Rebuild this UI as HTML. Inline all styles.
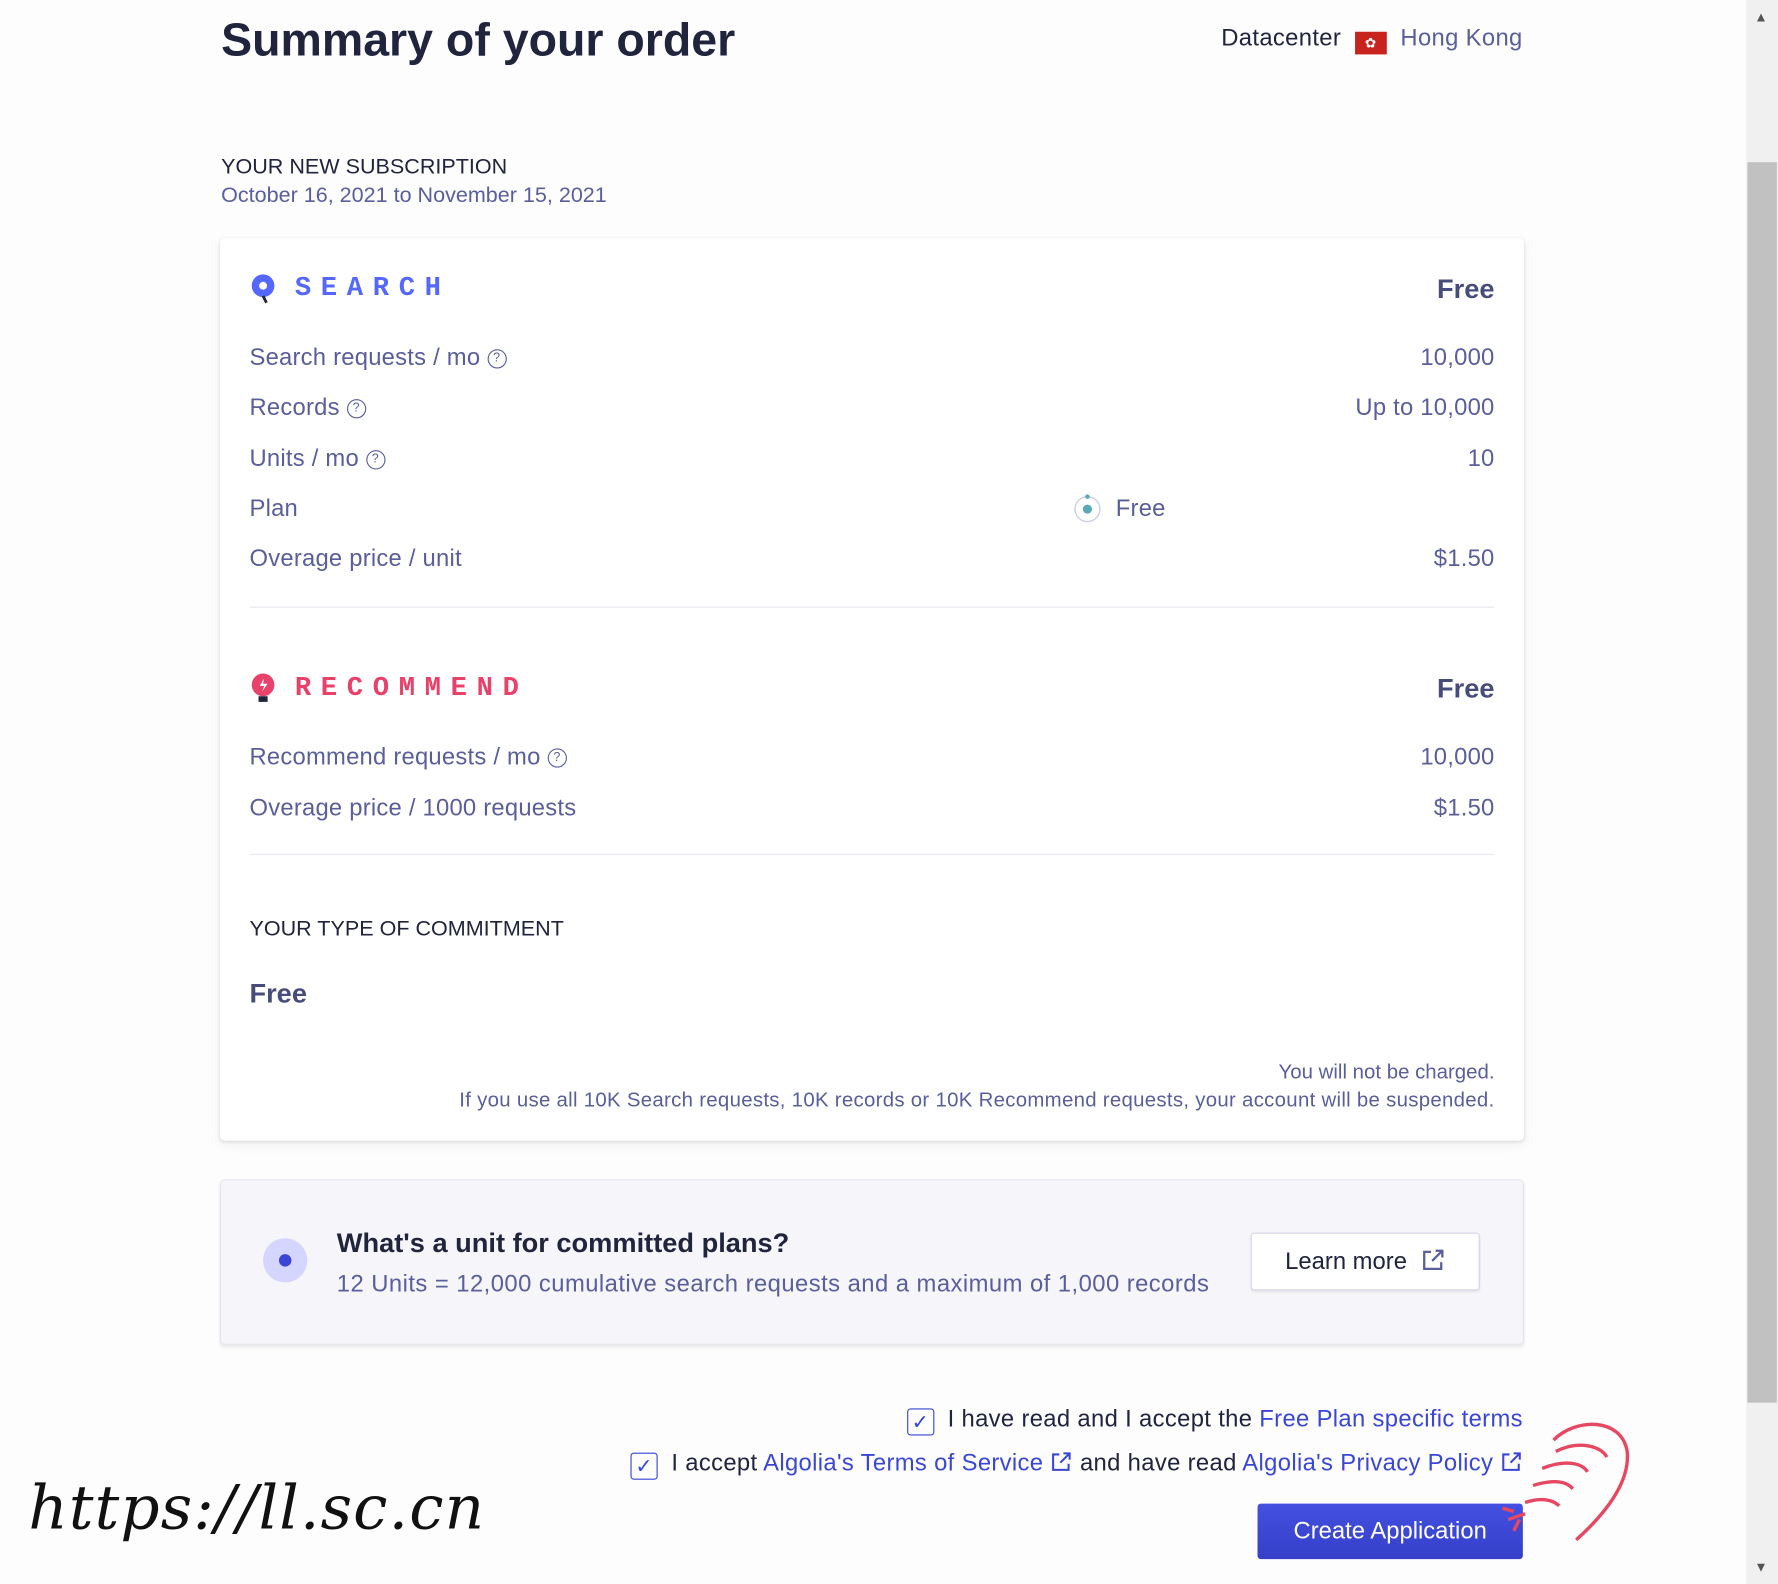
<!DOCTYPE html>
<html><head><meta charset="utf-8"><style>
html,body{margin:0;padding:0;width:1778px;height:1584px;overflow:hidden;background:#fdfdfe;}
#w{position:absolute;left:0;top:0;width:1568px;height:1397px;transform:scale(1.13393);transform-origin:0 0;font-family:"Liberation Sans",sans-serif;color:#5a5e9a;}
.a{position:absolute;white-space:nowrap;}
.r{text-align:right;}
.row{font-size:21px;color:#5a5e9a;letter-spacing:0.2px;}
.q{display:inline-block;width:15px;height:15px;border:1.5px solid #5a5e9a;border-radius:50%;font-size:11px;line-height:15px;text-align:center;vertical-align:3px;margin-left:6px;}
.hd{font-family:"Liberation Mono",monospace;font-weight:bold;font-size:24px;letter-spacing:8.5px;}
.free{font-size:24px;font-weight:bold;color:#484c7a;}
.line{position:absolute;left:220px;width:1098px;height:1px;background:#e8e8f0;}
.cb{display:inline-block;width:22px;height:22px;border:1.5px solid #3a46d4;border-radius:3px;vertical-align:-2px;margin-right:12px;color:#3a46d4;font-size:18px;line-height:22px;text-align:center;}
a{color:#3a46d4;text-decoration:none;}
</style></head><body><div id="w">
<div class="a" style="left:195px;top:12px;font-size:41px;font-weight:600;color:#21243d;">Summary of your order</div>
<div class="a" style="left:1077px;top:22px;font-size:21px;color:#21243d;letter-spacing:0.3px;">Datacenter <span style="display:inline-block;width:28px;height:20px;background:#c8241d;vertical-align:-2px;margin:0 6px;color:#fff;font-size:12px;text-align:center;line-height:20px;">✿</span> <span style="color:#5a5e9a">Hong Kong</span></div>
<div class="a" style="left:195px;top:137px;font-size:19px;color:#21243d;">YOUR NEW SUBSCRIPTION</div>
<div class="a" style="left:195px;top:162px;font-size:19px;">October 16, 2021 to November 15, 2021</div>

<div class="a" style="left:194px;top:210px;width:1150px;height:796px;background:#fff;border-radius:4px;box-shadow:0 1px 3px rgba(0,0,0,.12),0 4px 10px rgba(0,0,0,.05);"></div>

<svg class="a" style="left:221px;top:241px" width="22" height="28" viewBox="0 0 22 28"><circle cx="11" cy="11" r="10" fill="#5468ff"/><circle cx="11" cy="11" r="3.5" fill="#fff"/><path d="M11 20l3 6" stroke="#21243d" stroke-width="2.5"/></svg>
<div class="a hd" style="left:260px;top:241px;color:#5468ff;">SEARCH</div>
<div class="a free r" style="right:250px;top:242px;">Free</div>
<div class="a row" style="left:220px;top:304px;">Search requests / mo<span class="q">?</span></div>
<div class="a row r" style="right:250px;top:304px;">10,000</div>
<div class="a row" style="left:220px;top:348px;">Records<span class="q">?</span></div>
<div class="a row r" style="right:250px;top:348px;">Up to 10,000</div>
<div class="a row" style="left:220px;top:393px;">Units / mo<span class="q">?</span></div>
<div class="a row r" style="right:250px;top:393px;">10</div>
<div class="a row" style="left:220px;top:437px;">Plan</div>
<svg class="a" style="left:945px;top:434px" width="28" height="28"><circle cx="14" cy="15" r="11" fill="none" stroke="#ccd" stroke-width="1.2"/><circle cx="14" cy="15" r="4" fill="#5aa8b8"/><circle cx="14" cy="4" r="2" fill="#5aa8b8"/></svg>
<div class="a row" style="left:984px;top:437px;">Free</div>
<div class="a row" style="left:220px;top:481px;">Overage price / unit</div>
<div class="a row r" style="right:250px;top:481px;">$1.50</div>
<div class="line" style="top:535px"></div>

<svg class="a" style="left:221px;top:594px" width="22" height="28" viewBox="0 0 22 28"><circle cx="11" cy="10" r="10" fill="#e8416a"/><path d="M12 4l-4 7h4l-2 5 5-7h-4z" fill="#fff"/><rect x="7" y="20" width="8" height="5" fill="#21243d"/></svg>
<div class="a hd" style="left:260px;top:594px;color:#e8416a;">RECOMMEND</div>
<div class="a free r" style="right:250px;top:594px;">Free</div>
<div class="a row" style="left:220px;top:656px;">Recommend requests / mo<span class="q">?</span></div>
<div class="a row r" style="right:250px;top:656px;">10,000</div>
<div class="a row" style="left:220px;top:701px;">Overage price / 1000 requests</div>
<div class="a row r" style="right:250px;top:701px;">$1.50</div>
<div class="line" style="top:753px"></div>

<div class="a" style="left:220px;top:809px;font-size:19px;color:#21243d;">YOUR TYPE OF COMMITMENT</div>
<div class="a free" style="left:220px;top:863px;">Free</div>
<div class="a r" style="right:250px;top:935px;font-size:18px;">You will not be charged.</div>
<div class="a r" style="right:250px;top:960px;font-size:18px;letter-spacing:0.25px;">If you use all 10K Search requests, 10K records or 10K Recommend requests, your account will be suspended.</div>

<div class="a" style="left:194px;top:1040px;width:1148px;height:144px;background:#f5f5fa;border:1px solid #e6e6ee;border-radius:4px;box-shadow:0 2px 3px rgba(0,0,0,.08);"></div>
<div class="a" style="left:232px;top:1092px;width:39px;height:39px;border-radius:50%;background:#d4d6ff;"></div>
<div class="a" style="left:246px;top:1106px;width:11px;height:11px;border-radius:50%;background:#3a46d4;"></div>
<div class="a" style="left:297px;top:1083px;font-size:24px;font-weight:600;color:#21243d;">What's a unit for committed plans?</div>
<div class="a" style="left:297px;top:1121px;font-size:21px;letter-spacing:0.4px;">12 Units = 12,000 cumulative search requests and a maximum of 1,000 records</div>
<div class="a" style="left:1103px;top:1087px;width:200px;height:49px;background:#fff;border:1px solid #d6d6e7;border-radius:3px;box-shadow:0 1px 2px rgba(0,0,0,.08);font-size:21px;color:#21243d;line-height:49px;text-align:center;">Learn more <svg width="22" height="22" viewBox="0 0 22 22" style="vertical-align:-3px;margin-left:6px"><path d="M9 4H3v15h15v-6M13 3h6v6M19 3l-9 9" fill="none" stroke="#5a5e9a" stroke-width="2"/></svg></div>

<div class="a r" style="right:225px;top:1240px;font-size:21px;color:#21243d;letter-spacing:0.3px;"><span class="cb">✓</span>I have read and I accept the <a>Free Plan specific terms</a></div>
<div class="a r" style="right:225px;top:1279px;font-size:21px;color:#21243d;letter-spacing:0.3px;"><span class="cb">✓</span>I accept <a>Algolia's Terms of Service <svg width="20" height="20" viewBox="0 0 22 22" style="vertical-align:-2px"><path d="M9 4H3v15h15v-6M13 3h6v6M19 3l-9 9" fill="none" stroke="#3a46d4" stroke-width="2"/></svg></a> and have read <a>Algolia's Privacy Policy <svg width="20" height="20" viewBox="0 0 22 22" style="vertical-align:-2px"><path d="M9 4H3v15h15v-6M13 3h6v6M19 3l-9 9" fill="none" stroke="#3a46d4" stroke-width="2"/></svg></a></div>
<div class="a" style="left:1109px;top:1326px;width:234px;height:49px;background:linear-gradient(#4450e0,#3440c8);border-radius:3px;color:#fff;font-size:21px;line-height:50px;text-align:center;">Create Application</div>

<div class="a" style="left:25px;top:1298px;font-family:'DejaVu Serif',serif;font-size:54px;color:#111;font-style:italic;letter-spacing:1px;">https://ll.sc.cn</div>
<svg class="a" style="left:1310px;top:1250px" width="135" height="115" viewBox="0 0 135 115"><path d="M60 20C80 0 120 0 125 30C128 60 100 90 80 108M62 30c20-10 40-5 45 5M50 45c20-8 35-5 40 3M42 60c20-6 30-3 35 3M35 75c15-5 25-2 30 3M20 90l15-5M15 80l10 3M25 100l5-10" fill="none" stroke="#e54860" stroke-width="3"/></svg>

<div class="a" style="left:1540px;top:0;width:28px;height:1397px;background:#f0f0f0;"></div>
<div class="a" style="left:1541px;top:143px;width:26px;height:1094px;background:#c1c1c1;"></div>
<div class="a" style="left:1547px;top:8px;font-size:12px;color:#555;">▲</div>
<div class="a" style="left:1547px;top:1375px;font-size:12px;color:#555;">▼</div>
</div></body></html>
